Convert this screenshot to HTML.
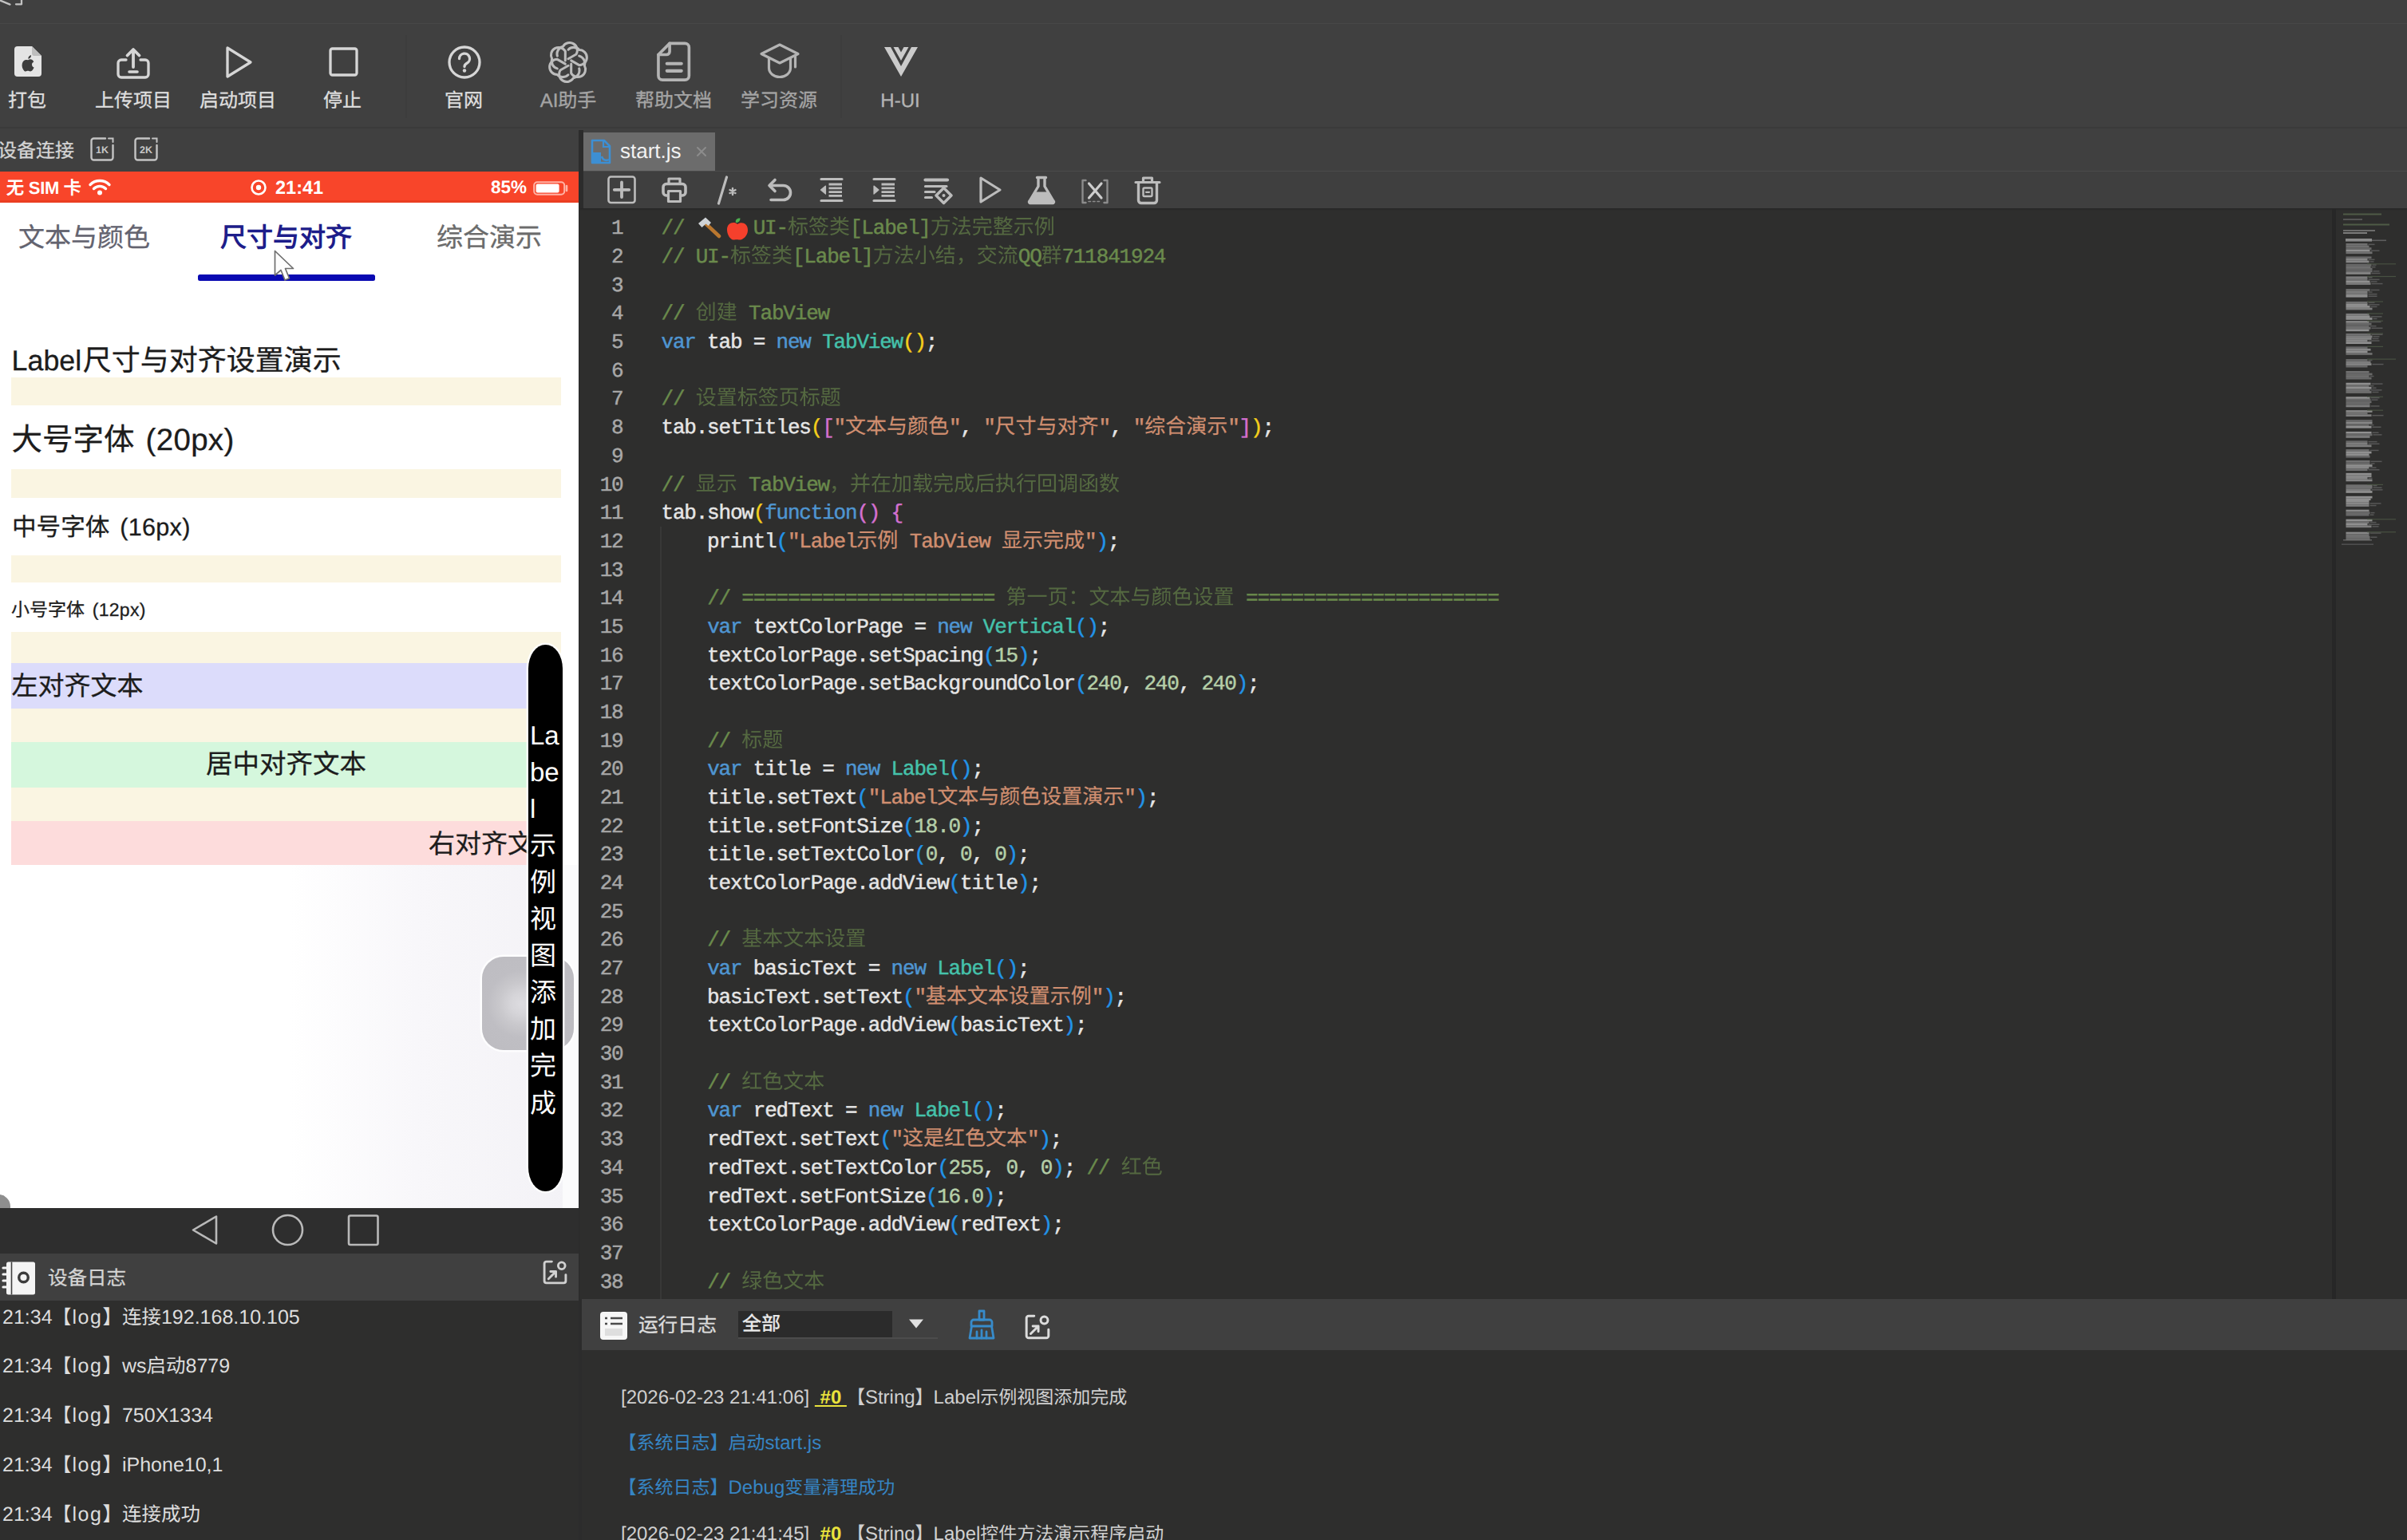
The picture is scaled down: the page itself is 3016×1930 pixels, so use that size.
<!DOCTYPE html>
<html lang="zh-CN"><head><meta charset="utf-8"><title>IDE - start.js</title>
<style>
*{box-sizing:border-box;margin:0;padding:0}
html,body{width:3016px;height:1930px;overflow:hidden;background:#404040}
body{position:relative;font-family:"Liberation Sans",sans-serif;color:#d8d8d8;text-rendering:geometricPrecision}
.a{position:absolute}
.t{position:absolute;white-space:nowrap}
.cj{display:inline-block;white-space:nowrap;letter-spacing:0;overflow:visible;text-align:left;vertical-align:baseline}
.cj i{display:inline-block;width:1em;text-align:center;font-style:normal}
.ic{fill:none;stroke:#d6d6d6;stroke-width:3.300;stroke-linecap:round;stroke-linejoin:round}
.icd{fill:none;stroke:#b4b4b4;stroke-width:3.200;stroke-linecap:round;stroke-linejoin:round}
.ei{fill:none;stroke:#bcbcbc;stroke-width:2.6;stroke-linecap:round;stroke-linejoin:round}
.code{position:absolute;left:828.5px;white-space:pre;font-family:"Liberation Mono",monospace;font-size:26px;letter-spacing:-1.2px;height:36px;line-height:36px;color:#e6e6e6;-webkit-text-stroke-width:.45px}
.ln{position:absolute;left:727px;width:53.5px;text-align:right;font-family:"Liberation Mono",monospace;font-size:26px;letter-spacing:-1.2px;height:36px;line-height:36px;color:#a8a8a8;-webkit-text-stroke-width:.45px}
.cm{color:#6a8a4c}.em{display:inline-block;letter-spacing:0}.cm .cj{opacity:.64;-webkit-text-stroke-width:0}.st .cj{-webkit-text-stroke-width:.2px}.kw{color:#4f96d2}.cl{color:#45c2ab}.st{color:#d08e70}.nu{color:#b5cea8}
.b1{color:#f4cf1c}.b2{color:#d470d0}.b3{color:#2294e8}
.code .cj{font-family:"Liberation Mono","Liberation Serif",serif}
</style></head>
<body>
<div class="a" style="left:0px;top:0px;width:3016px;height:163px;background:#404040;"></div>
<div class="a" style="left:0px;top:28.6px;width:3016px;height:1.6px;background:#474747;"></div>
<svg class="a" style="left:0px;top:0px;filter:blur(.5px)" width="34" height="10" viewBox="0 0 34 10"><path d="M-1 0L12.500 5.600M27 -1V5.300H20" fill="none" stroke="#c2c2c2" stroke-width="2.300" stroke-linecap="round" stroke-linejoin="round"/></svg>
<div class="a" style="left:508px;top:44px;width:1.5px;height:104px;background:#3d3d3d;"></div>
<div class="a" style="left:1053px;top:44px;width:1.5px;height:104px;background:#3d3d3d;"></div>
<div class="a" style="left:0px;top:159px;width:3016px;height:1.5px;background:#3a3a3a;"></div>
<svg class="a" style="left:18px;top:58px;" width="34" height="38" viewBox="0 0 34 38"><path d="M4 0H22L34 12V34a4 4 0 0 1-4 4H4a4 4 0 0 1-4-4V4a4 4 0 0 1 4-4z" fill="#e4e4e4"/><path d="M22 0V9a3 3 0 0 0 3 3h9z" fill="#bdbdbd"/><path d="M17.2 17.2c1.6-1.2 3.7-1.3 5.2-.2 1 .7 1.6 1.6 1.9 2.6-1.6.7-2.4 2-2.3 3.6.1 1.6 1 2.8 2.6 3.4-.6 1.9-1.700 3.500-3.200 4.500-1 .6-2.100.5-3.100 0-.9-.4-1.800-.4-2.700 0-1.100.5-2.200.5-3.100-.2-2.300-1.900-3.500-5.700-2.700-9.100.7-2.800 2.700-4.700 5.100-4.700.9 0 1.700.3 2.300.1z" fill="#3c3c3c"/><path d="M17.3 15.8c-.2-2.300 1.300-4.400 3.700-4.900.3 2.400-1.400 4.600-3.700 4.900z" fill="#3c3c3c"/></svg>
<svg class="a" style="left:145px;top:58px;" width="44" height="42" viewBox="0 0 44 42"><g class="ic"><path d="M13 17H7a4 4 0 0 0-4 4V35a4 4 0 0 0 4 4H37a4 4 0 0 0 4-4V21a4 4 0 0 0-4-4H31"/><path d="M22 26V5M14.500 11.500l7.500-7.500 7.500 7.500" style="stroke-width:3.800"/><path d="M17 32H27" style="stroke-width:3.600"/></g></svg>
<svg class="a" style="left:281px;top:56px;" width="38" height="44" viewBox="0 0 38 44"><path class="ic" d="M4 4L33 22L4 40Z"/></svg>
<svg class="a" style="left:411px;top:58px;" width="40" height="40" viewBox="0 0 40 40"><rect class="ic" x="3" y="3" width="33" height="33" rx="2.500"/></svg>
<svg class="a" style="left:560px;top:56px;" width="44" height="44" viewBox="0 0 44 44"><circle class="ic" cx="22" cy="22" r="19"/><path class="ic" d="M15.5 17.500a6.500 6.500 0 1 1 9.500 5.800c-2 1.100-3 2.200-3 4.200"/><circle cx="22" cy="32.500" r="2.200" fill="#d4d4d4"/></svg>
<svg class="a" style="left:686px;top:52px;" width="52" height="52" viewBox="0 0 52 52"><g class="icd" style="stroke-width:2.500;stroke:#bcbcbc" transform="translate(26 26) scale(1.220)"><path d="M0 -3.500L8.200 -8.200A7.800 7.800 0 0 0 -5.300 -16.200A7.800 7.800 0 0 0 -11.200 -6.500" transform="rotate(0)"/><path d="M0 -3.500L8.200 -8.200A7.800 7.800 0 0 0 -5.300 -16.200A7.800 7.800 0 0 0 -11.200 -6.500" transform="rotate(60)"/><path d="M0 -3.500L8.200 -8.200A7.800 7.800 0 0 0 -5.300 -16.200A7.800 7.800 0 0 0 -11.200 -6.500" transform="rotate(120)"/><path d="M0 -3.500L8.200 -8.200A7.800 7.800 0 0 0 -5.300 -16.200A7.800 7.800 0 0 0 -11.200 -6.500" transform="rotate(180)"/><path d="M0 -3.500L8.200 -8.200A7.800 7.800 0 0 0 -5.300 -16.200A7.800 7.800 0 0 0 -11.200 -6.500" transform="rotate(240)"/><path d="M0 -3.500L8.200 -8.200A7.800 7.800 0 0 0 -5.300 -16.200A7.800 7.800 0 0 0 -11.200 -6.500" transform="rotate(300)"/></g></svg>
<svg class="a" style="left:821px;top:51px;" width="48" height="54" viewBox="0 0 48 54"><g class="icd" transform="scale(1.130)"><path d="M16 3H33a4.500 4.500 0 0 1 4.500 4.500V39a4.500 4.500 0 0 1-4.500 4.500H8A4.500 4.500 0 0 1 3.500 39V15.500Z"/><path d="M16 3V12a3.500 3.500 0 0 1-3.500 3.500H3.500"/><path d="M13 25.500H29M13 33.500H29" style="stroke-width:3.600"/></g></svg>
<svg class="a" style="left:951px;top:52px;" width="52" height="50" viewBox="0 0 52 50"><g class="icd"><path d="M26 4L49 15.500L26 27L3 15.500Z"/><path d="M12.500 21V33c0 6.500 6 11.500 13.500 11.500s13.500-5 13.500-11.500V21"/><path d="M45.500 18V32"/></g></svg>
<svg class="a" style="left:1107.5px;top:58.5px;" width="42" height="37" viewBox="0 0 42 37"><path d="M0 0H8L21 24L34 0H42L21 37Z" fill="#cbcbcb"/><path d="M11.500 0H17.500L21 6.500L24.500 0H30.500L21 17Z" fill="#cbcbcb"/></svg>
<div class="t" style="top:109.2px;height:36px;line-height:36px;font-size:24px;left:34px;width:400px;margin-left:-200px;text-align:center;color:#dedede;-webkit-text-stroke-width:.35px"><span class="cj" style="width:48px;font-size:24px"><i>打</i><i>包</i></span></div>
<div class="t" style="top:109.2px;height:36px;line-height:36px;font-size:24px;left:167px;width:400px;margin-left:-200px;text-align:center;color:#dedede;-webkit-text-stroke-width:.35px"><span class="cj" style="width:96px;font-size:24px"><i>上</i><i>传</i><i>项</i><i>目</i></span></div>
<div class="t" style="top:109.2px;height:36px;line-height:36px;font-size:24px;left:298px;width:400px;margin-left:-200px;text-align:center;color:#dedede;-webkit-text-stroke-width:.35px"><span class="cj" style="width:96px;font-size:24px"><i>启</i><i>动</i><i>项</i><i>目</i></span></div>
<div class="t" style="top:109.2px;height:36px;line-height:36px;font-size:24px;left:429px;width:400px;margin-left:-200px;text-align:center;color:#dedede;-webkit-text-stroke-width:.35px"><span class="cj" style="width:48px;font-size:24px"><i>停</i><i>止</i></span></div>
<div class="t" style="top:109.2px;height:36px;line-height:36px;font-size:24px;left:581px;width:400px;margin-left:-200px;text-align:center;color:#dedede;-webkit-text-stroke-width:.35px"><span class="cj" style="width:48px;font-size:24px"><i>官</i><i>网</i></span></div>
<div class="t" style="top:109.2px;height:36px;line-height:36px;font-size:24px;left:712px;width:400px;margin-left:-200px;text-align:center;color:#a4a4a4;-webkit-text-stroke-width:.35px">AI<span class="cj" style="width:48px;font-size:24px"><i>助</i><i>手</i></span></div>
<div class="t" style="top:109.2px;height:36px;line-height:36px;font-size:24px;left:844px;width:400px;margin-left:-200px;text-align:center;color:#a4a4a4;-webkit-text-stroke-width:.35px"><span class="cj" style="width:96px;font-size:24px"><i>帮</i><i>助</i><i>文</i><i>档</i></span></div>
<div class="t" style="top:109.2px;height:36px;line-height:36px;font-size:24px;left:976px;width:400px;margin-left:-200px;text-align:center;color:#a4a4a4;-webkit-text-stroke-width:.35px"><span class="cj" style="width:96px;font-size:24px"><i>学</i><i>习</i><i>资</i><i>源</i></span></div>
<div class="t" style="top:109.2px;height:36px;line-height:36px;font-size:24px;left:1128px;width:400px;margin-left:-200px;text-align:center;color:#b4b4b4;-webkit-text-stroke-width:.35px">H-UI</div>
<div class="a" style="left:0px;top:163px;width:725px;height:52px;background:#404040;"></div>
<div class="t" style="top:171.5px;height:36px;line-height:36px;font-size:24px;left:-3px;color:#d4d4d4;-webkit-text-stroke-width:.3px"><span class="cj" style="width:96px;font-size:24px"><i>设</i><i>备</i><i>连</i><i>接</i></span></div>
<svg class="a" style="left:112px;top:171px;" width="32" height="32" viewBox="0 0 32 32"><path d="M20 2.500H5.500A3 3 0 0 0 2.500 5.500V26.500A3 3 0 0 0 5.500 29.500H26.500A3 3 0 0 0 29.500 26.500V11" fill="none" stroke="#c4c4c4" stroke-width="2.400" stroke-linecap="round"/><path d="M24 2.500H29.500V7" fill="none" stroke="#c4c4c4" stroke-width="2" stroke-linecap="round"/><text x="16" y="21" font-family="Liberation Sans,sans-serif" font-size="12.500" font-weight="bold" fill="#c8c8c8" text-anchor="middle">1K</text></svg>
<svg class="a" style="left:167px;top:171px;" width="32" height="32" viewBox="0 0 32 32"><path d="M20 2.500H5.500A3 3 0 0 0 2.500 5.500V26.500A3 3 0 0 0 5.500 29.500H26.500A3 3 0 0 0 29.500 26.500V11" fill="none" stroke="#c4c4c4" stroke-width="2.400" stroke-linecap="round"/><path d="M24 2.500H29.500V7" fill="none" stroke="#c4c4c4" stroke-width="2" stroke-linecap="round"/><text x="16" y="21" font-family="Liberation Sans,sans-serif" font-size="12.500" font-weight="bold" fill="#c8c8c8" text-anchor="middle">2K</text></svg>
<div class="a" style="left:0px;top:215px;width:725px;height:1299px;background:#ffffff;"></div>
<div class="a" style="left:0px;top:1084px;width:725px;height:430px;background:linear-gradient(90deg,#ffffff 0%,#ffffff 50%,#f8f7fa 72%,#f3f2f6 100%);"></div>
<div class="a" style="left:0px;top:215px;width:725px;height:38.5px;background:#f8452a;"></div>
<div class="a" style="left:0px;top:250.5px;width:725px;height:3px;background:#ea3d22;"></div>
<div class="t" style="top:218.5px;height:33px;line-height:33px;font-size:22px;left:8px;color:#ffffff;font-weight:bold;letter-spacing:-0.3px"><span class="cj" style="width:22px;font-size:22px"><i>无</i></span> SIM <span class="cj" style="width:22px;font-size:22px"><i>卡</i></span></div>
<svg class="a" style="left:110px;top:222px;" width="30" height="24" viewBox="0 0 30 24"><g fill="none" stroke="#fff" stroke-width="3.400" stroke-linecap="round"><path d="M3 9.500a17 17 0 0 1 24 0"/><path d="M7.500 14.500a10.500 10.500 0 0 1 15 0"/></g><circle cx="15" cy="19.500" r="3" fill="#fff"/></svg>
<svg class="a" style="left:313px;top:224px;" width="22" height="22" viewBox="0 0 22 22"><circle cx="11" cy="11" r="8.500" fill="none" stroke="#fff" stroke-width="2.600"/><circle cx="11" cy="11" r="3.200" fill="#fff"/></svg>
<div class="t" style="top:217.5px;height:35px;line-height:35px;font-size:23.5px;left:345px;color:#ffffff;font-weight:bold">21:41</div>
<div class="t" style="top:218.0px;height:34px;line-height:34px;font-size:22.5px;right:2356px;text-align:right;color:#ffffff;font-weight:bold">85%</div>
<svg class="a" style="left:668px;top:227px;" width="46" height="18" viewBox="0 0 46 18"><rect x="1.200" y="1.200" width="38" height="15.600" rx="4" fill="none" stroke="#ffb3a6" stroke-width="2"/><rect x="3.600" y="3.600" width="29" height="10.800" rx="2" fill="#fff"/><path d="M42 6v6" stroke="#ffb3a6" stroke-width="2.600" stroke-linecap="round"/></svg>
<div class="t" style="top:273.3px;height:50px;line-height:50px;font-size:33px;left:23px;color:#63636f;-webkit-text-stroke-width:.3px"><span class="cj" style="width:165px;font-size:33px"><i>文</i><i>本</i><i>与</i><i>颜</i><i>色</i></span></div>
<div class="t" style="top:273.3px;height:50px;line-height:50px;font-size:33px;left:276px;color:#1d1d8a;font-weight:bold"><span class="cj" style="width:165px;font-size:33px"><i>尺</i><i>寸</i><i>与</i><i>对</i><i>齐</i></span></div>
<div class="t" style="top:273.3px;height:50px;line-height:50px;font-size:33px;left:547px;color:#6b6b6b;-webkit-text-stroke-width:.3px"><span class="cj" style="width:132px;font-size:33px"><i>综</i><i>合</i><i>演</i><i>示</i></span></div>
<div class="a" style="left:248px;top:343.5px;width:222px;height:8px;background:#0909b2;border-radius:2.500px"></div>
<div class="t" style="top:424.6px;height:54px;line-height:54px;font-size:35.8px;left:14.6px;color:#1c1c1c;-webkit-text-stroke-width:.3px">Label<span style="margin-left:1.500px"><span class="cj" style="width:324px;font-size:36px"><i>尺</i><i>寸</i><i>与</i><i>对</i><i>齐</i><i>设</i><i>置</i><i>演</i><i>示</i></span></span></div>
<div class="a" style="left:14px;top:473px;width:689px;height:35px;background:#faf5e2;"></div>
<div class="a" style="left:14px;top:588px;width:689px;height:36px;background:#faf5e2;"></div>
<div class="a" style="left:14px;top:696px;width:689px;height:34px;background:#faf5e2;"></div>
<div class="a" style="left:14px;top:792px;width:689px;height:39px;background:#faf5e2;"></div>
<div class="a" style="left:14px;top:888px;width:689px;height:42px;background:#faf5e2;"></div>
<div class="a" style="left:14px;top:987px;width:689px;height:42px;background:#faf5e2;"></div>
<div class="t" style="top:523.0px;height:58px;line-height:58px;font-size:38.5px;left:14.6px;color:#1c1c1c;word-spacing:3px;letter-spacing:.3px;-webkit-text-stroke-width:.3px"><span class="cj" style="width:154.0px;font-size:38.5px"><i>大</i><i>号</i><i>字</i><i>体</i></span> (20px)</div>
<div class="t" style="top:638.0px;height:46px;line-height:46px;font-size:30.6px;left:15px;color:#1c1c1c;word-spacing:4px;letter-spacing:.3px;-webkit-text-stroke-width:.3px"><span class="cj" style="width:122.4px;font-size:30.6px"><i>中</i><i>号</i><i>字</i><i>体</i></span> (16px)</div>
<div class="t" style="top:747.0px;height:34px;line-height:34px;font-size:23px;left:14px;color:#1e1e1e;word-spacing:3px;letter-spacing:.3px;-webkit-text-stroke-width:.3px"><span class="cj" style="width:92px;font-size:23px"><i>小</i><i>号</i><i>字</i><i>体</i></span> (12px)</div>
<div class="a" style="left:14px;top:831px;width:689px;height:57px;background:#dcdcfb;"></div>
<div class="t" style="top:835.0px;height:50px;line-height:50px;font-size:33px;left:14.6px;color:#1c1c1c;-webkit-text-stroke-width:.3px"><span class="cj" style="width:165px;font-size:33px"><i>左</i><i>对</i><i>齐</i><i>文</i><i>本</i></span></div>
<div class="a" style="left:14px;top:930px;width:689px;height:57px;background:#d5f7dd;"></div>
<div class="t" style="top:934.0px;height:50px;line-height:50px;font-size:33.5px;left:358.5px;width:400px;margin-left:-200px;text-align:center;color:#1c1c1c;-webkit-text-stroke-width:.3px"><span class="cj" style="width:201.0px;font-size:33.5px"><i>居</i><i>中</i><i>对</i><i>齐</i><i>文</i><i>本</i></span></div>
<div class="a" style="left:14px;top:1029px;width:689px;height:55px;background:#fddcdc;"></div>
<div class="t" style="top:1033.0px;height:50px;line-height:50px;font-size:33px;right:2314px;text-align:right;color:#1c1c1c;-webkit-text-stroke-width:.3px"><span class="cj" style="width:165px;font-size:33px"><i>右</i><i>对</i><i>齐</i><i>文</i><i>本</i></span></div>
<div class="a" style="left:705px;top:1084px;width:20px;height:430px;background:#fbfbfc;"></div>
<div class="a" style="left:604px;top:1199px;width:115px;height:117px;border-radius:27px;background:radial-gradient(circle at 49px 59px,#dddce0 0,#d6d5d9 13px,#c9c8cc 27px,#bfbec3 42px,#bcbbc0 100%);box-shadow:0 0 0 2.500px rgba(255,255,255,.8)"></div>
<div class="a" style="left:662px;top:808px;width:42.5px;height:685px;background:#000000;border-radius:21.250px / 30px;box-shadow:0 0 0 2.500px rgba(255,255,255,.85)"></div>
<div class="t" style="top:897.0px;height:50px;line-height:50px;font-size:33px;left:664px;color:#ffffff;">La</div>
<div class="t" style="top:943.05px;height:50px;line-height:50px;font-size:33px;left:664px;color:#ffffff;">be</div>
<div class="t" style="top:989.1px;height:50px;line-height:50px;font-size:33px;left:664px;color:#ffffff;">l</div>
<div class="t" style="top:1035.15px;height:50px;line-height:50px;font-size:33px;left:664px;color:#ffffff;"><span class="cj" style="width:33px;font-size:33px"><i>示</i></span></div>
<div class="t" style="top:1081.2px;height:50px;line-height:50px;font-size:33px;left:664px;color:#ffffff;"><span class="cj" style="width:33px;font-size:33px"><i>例</i></span></div>
<div class="t" style="top:1127.25px;height:50px;line-height:50px;font-size:33px;left:664px;color:#ffffff;"><span class="cj" style="width:33px;font-size:33px"><i>视</i></span></div>
<div class="t" style="top:1173.3px;height:50px;line-height:50px;font-size:33px;left:664px;color:#ffffff;"><span class="cj" style="width:33px;font-size:33px"><i>图</i></span></div>
<div class="t" style="top:1219.35px;height:50px;line-height:50px;font-size:33px;left:664px;color:#ffffff;"><span class="cj" style="width:33px;font-size:33px"><i>添</i></span></div>
<div class="t" style="top:1265.4px;height:50px;line-height:50px;font-size:33px;left:664px;color:#ffffff;"><span class="cj" style="width:33px;font-size:33px"><i>加</i></span></div>
<div class="t" style="top:1311.45px;height:50px;line-height:50px;font-size:33px;left:664px;color:#ffffff;"><span class="cj" style="width:33px;font-size:33px"><i>完</i></span></div>
<div class="t" style="top:1357.5px;height:50px;line-height:50px;font-size:33px;left:664px;color:#ffffff;"><span class="cj" style="width:33px;font-size:33px"><i>成</i></span></div>
<svg class="a" style="left:342px;top:312px;" width="30" height="44" viewBox="0 0 30 44"><path d="M2.500 2.500V33L10 26.500L15 39L20.500 36.800L15.500 24.500H25.500Z" fill="#fdfdfd" stroke="#6e6e6e" stroke-width="1.700" stroke-linejoin="round"/></svg>
<svg class="a" style="left:0px;top:1492px;" width="16" height="22" viewBox="0 0 16 22"><circle cx="-2" cy="20" r="15" fill="#8e8e8e"/></svg>
<div class="a" style="left:0px;top:1513.5px;width:727px;height:58px;background:#2e2e2e;"></div>
<svg class="a" style="left:236px;top:1519px;" width="240" height="46" viewBox="0 0 240 46"><g fill="none" stroke="#b9b9b9" stroke-width="2.600" stroke-linejoin="round"><path d="M35 5.500V39.500L6 22.500Z"/><circle cx="124.500" cy="22.500" r="18.500"/><rect x="201" y="4.500" width="36.500" height="36.500" rx="2"/></g></svg>
<div class="a" style="left:0px;top:1571.2px;width:727px;height:59px;background:#404040;"></div>
<svg class="a" style="left:2px;top:1580px;" width="44" height="44" viewBox="0 0 44 44"><rect x="6" y="1.500" width="36" height="41" rx="2.500" fill="#f4f4f4"/><path d="M2 9H10M2 17H10M2 25H10M2 33H10" stroke="#f4f4f4" stroke-width="3.200" stroke-linecap="round"/><path d="M12.500 1.500V42.500" stroke="#404040" stroke-width="1.600"/><circle cx="27.500" cy="21" r="5.800" fill="none" stroke="#3c3c3c" stroke-width="3.400"/></svg>
<div class="t" style="top:1584.1px;height:37px;line-height:37px;font-size:24.5px;left:60px;color:#d4d4d4;-webkit-text-stroke-width:.3px"><span class="cj" style="width:98.0px;font-size:24.5px"><i>设</i><i>备</i><i>日</i><i>志</i></span></div>
<svg class="a" style="left:678.5px;top:1577.5px;" width="33" height="33" viewBox="0 0 32 32"><g fill="none" stroke="#d0d0d0" stroke-width="2.800" stroke-linecap="round" stroke-linejoin="round"><path d="M12 3H5.500A2.500 2.500 0 0 0 3 5.500V26.500A2.500 2.500 0 0 0 5.500 29H26.500A2.500 2.500 0 0 0 29 26.500V19"/><circle cx="24" cy="8" r="4.200"/><path d="M8 24L17 15M10.500 15H17V21.500"/></g></svg>
<div class="a" style="left:0px;top:1630.2px;width:727px;height:300px;background:#2e2e2d;"></div>
<div class="t" style="top:1631.6px;height:38px;line-height:38px;font-size:25px;left:3px;color:#dddddd;">21:34<span class="cj" style="width:24px;font-size:24px"><i>【</i></span><span style="letter-spacing:1.5px;margin-left:1px">log</span><span class="cj" style="width:73.5px;font-size:24.5px"><i>】</i><i>连</i><i>接</i></span>192.168.10.105</div>
<div class="t" style="top:1693.45px;height:38px;line-height:38px;font-size:25px;left:3px;color:#dddddd;">21:34<span class="cj" style="width:24px;font-size:24px"><i>【</i></span><span style="letter-spacing:1.5px;margin-left:1px">log</span><span class="cj" style="width:24.5px;font-size:24.5px"><i>】</i></span>ws<span class="cj" style="width:49.0px;font-size:24.5px"><i>启</i><i>动</i></span>8779</div>
<div class="t" style="top:1755.3px;height:38px;line-height:38px;font-size:25px;left:3px;color:#dddddd;">21:34<span class="cj" style="width:24px;font-size:24px"><i>【</i></span><span style="letter-spacing:1.5px;margin-left:1px">log</span><span class="cj" style="width:24.5px;font-size:24.5px"><i>】</i></span>750X1334</div>
<div class="t" style="top:1817.15px;height:38px;line-height:38px;font-size:25px;left:3px;color:#dddddd;">21:34<span class="cj" style="width:24px;font-size:24px"><i>【</i></span><span style="letter-spacing:1.5px;margin-left:1px">log</span><span class="cj" style="width:24.5px;font-size:24.5px"><i>】</i></span>iPhone10,1</div>
<div class="t" style="top:1879.0px;height:38px;line-height:38px;font-size:25px;left:3px;color:#dddddd;">21:34<span class="cj" style="width:24px;font-size:24px"><i>【</i></span><span style="letter-spacing:1.5px;margin-left:1px">log</span><span class="cj" style="width:122.5px;font-size:24.5px"><i>】</i><i>连</i><i>接</i><i>成</i><i>功</i></span></div>
<div class="a" style="left:725px;top:163px;width:6px;height:1767px;background:#2c2c2c;"></div>
<div class="a" style="left:731px;top:163px;width:2285px;height:51px;background:#404040;"></div>
<div class="a" style="left:731px;top:166px;width:165px;height:48px;background:#6c6c6c;"></div>
<svg class="a" style="left:739px;top:174px;" width="28" height="32" viewBox="0 0 28 32"><path d="M3 2H18L25 9V30H3Z" fill="none" stroke="#3d8fd3" stroke-width="2.600" stroke-linejoin="round"/><path d="M3 17H14V30H3Z" fill="#3d8fd3"/><path d="M17 2V10H25" fill="none" stroke="#3d8fd3" stroke-width="2.200"/><path d="M15 22a6 6 0 0 0 9 4" fill="none" stroke="#3d8fd3" stroke-width="2.600"/></svg>
<div class="t" style="top:170.0px;height:39px;line-height:39px;font-size:26px;left:777px;color:#f2f2f2;">start.js</div>
<svg class="a" style="left:871px;top:182px;" width="16" height="16" viewBox="0 0 16 16"><path d="M3 3L13 13M13 3L3 13" stroke="#8c8c8c" stroke-width="2" stroke-linecap="round"/></svg>
<div class="a" style="left:731px;top:214px;width:2285px;height:48px;background:#3f3f3f;"></div>
<div class="a" style="left:731px;top:213.5px;width:2285px;height:1.2px;background:#4a4a4a;"></div>
<svg class="a" style="left:759.0px;top:217.5px;" width="40" height="40" viewBox="0 0 40 40"><g class="ei"><rect x="3.500" y="3.500" width="33" height="32.500" rx="3"/><path d="M20 10.500V29M10.800 19.800H29.200" style="stroke-width:3.800"/></g></svg>
<svg class="a" style="left:825.0px;top:217.5px;" width="40" height="40" viewBox="0 0 40 40"><g class="ei"><path d="M13 12.500V6H27V12.500" style="stroke-width:3.200"/><rect x="6" y="12.500" width="28" height="14.500" rx="4" style="stroke-width:3.600"/><rect x="12.500" y="21.500" width="15" height="13" fill="#3f3f3f" style="stroke-width:3.200"/></g></svg>
<svg class="a" style="left:891.0px;top:217.5px;" width="40" height="40" viewBox="0 0 40 40"><g class="ei"><path d="M19.500 4L9.500 37" style="stroke-width:3.200"/><path d="M27 18V26M23.500 20L30.500 24M30.500 20L23.500 24" style="stroke-width:2.400"/></g></svg>
<svg class="a" style="left:957.0px;top:217.5px;" width="40" height="40" viewBox="0 0 40 40"><g class="ei"><path d="M8 14.500H24.500a9 9 0 0 1 0 18H9" style="stroke-width:3.600"/><path d="M14 7.500L7 14.500L14 21.500" style="stroke-width:3.600"/></g></svg>
<svg class="a" style="left:1022.0px;top:217.5px;" width="40" height="40" viewBox="0 0 40 40"><g class="ei"><path d="M7 6.500H33M7 33.500H33" style="stroke-width:3.200"/><path d="M16.500 13H33M16.500 17.800H33M16.500 22.600H33M16.500 27.400H33" style="stroke-width:2.800;stroke-linecap:butt"/><path d="M12.500 15L6.500 20L12.500 25Z" fill="#bcbcbc" style="stroke-width:1.200"/></g></svg>
<svg class="a" style="left:1088.0px;top:217.5px;" width="40" height="40" viewBox="0 0 40 40"><g class="ei"><path d="M7 6.500H33M7 33.500H33" style="stroke-width:3.200"/><path d="M16.500 13H33M16.500 17.800H33M16.500 22.600H33M16.500 27.400H33" style="stroke-width:2.800;stroke-linecap:butt"/><path d="M7 15L13 20L7 25Z" fill="#bcbcbc" style="stroke-width:1.200"/></g></svg>
<svg class="a" style="left:1154.0px;top:217.5px;" width="40" height="40" viewBox="0 0 40 40"><g class="ei"><path d="M5.500 7.500H33" style="stroke-width:4.200"/><path d="M5.500 15.500H32M5.500 22.500H17M5.500 29.500H13.500" style="stroke-width:3.200"/><path d="M28.500 17.500L38 27L28.500 36.500L19 27Z" fill="#3f3f3f" style="stroke-width:3.400"/><circle cx="28.500" cy="27" r="2" fill="#bcbcbc" stroke="none"/></g></svg>
<svg class="a" style="left:1220.0px;top:217.5px;" width="40" height="40" viewBox="0 0 40 40"><g class="ei"><path d="M9 5L33 20L9 35Z" style="stroke-width:3.200"/></g></svg>
<svg class="a" style="left:1285.0px;top:217.5px;" width="40" height="40" viewBox="0 0 40 40"><g class="ei"><path d="M14.500 4.500H25.500M16 5V15.500L5 34A1.500 1.500 0 0 0 6.500 36.500H33.500A1.500 1.500 0 0 0 35 34L24 15.500V5" style="stroke-width:3.400"/><path d="M11.500 22.500H28.500L35 35.500H5Z" fill="#bcbcbc" stroke="none"/></g></svg>
<svg class="a" style="left:1352.0px;top:217.5px;" width="40" height="40" viewBox="0 0 40 40"><g class="ei"><path d="M8.500 8H4.500V36H8.500M31.500 8H35.500V36H31.500" style="stroke:#8c8c8c;stroke-width:2.400"/><path d="M12.500 12L28 30M28 12L12.500 30" style="stroke:#cdcdcd;stroke-width:3.200"/><path d="M12 34.500H28" style="stroke:#8c8c8c;stroke-width:1.600;stroke-dasharray:2.500 3"/></g></svg>
<svg class="a" style="left:1418.0px;top:217.5px;" width="40" height="40" viewBox="0 0 40 40"><g class="ei"><path d="M5 10.500H35M14.500 10V5H25.500V10" style="stroke-width:3.200"/><path d="M8.500 11V33a3.500 3.500 0 0 0 3.500 3.500H28A3.500 3.500 0 0 0 31.500 33V11" style="stroke-width:3.400"/><rect x="14.500" y="17.500" width="11" height="10.500" rx="1.500" style="stroke-width:2.400"/><path d="M18 22.800H22" style="stroke-width:2.200"/></g></svg>
<div class="a" style="left:727px;top:261px;width:2289px;height:1367px;background:#2e2e2d;"></div>
<div class="a" style="left:727px;top:260.5px;width:2289px;height:3px;background:linear-gradient(#262626,#2e2e2d);"></div>
<div class="a" style="left:2922px;top:262px;width:5px;height:1366px;background:#272727;"></div>
<div class="a" style="left:827px;top:660px;width:1.5px;height:968px;background:#383837;"></div>
<svg class="a" style="left:0;top:0;filter:blur(.7px)" width="3016" height="700" viewBox="0 0 3016 700" ><rect x="2936.0" y="267.5" width="48.0" height="2.0" fill="#55634b" opacity="0.85"/><rect x="2936.0" y="274.0" width="24.0" height="2.0" fill="#5a5a5a" opacity="0.85"/><rect x="2936.0" y="280.5" width="58.0" height="2.0" fill="#55634b" opacity="0.85"/><rect x="2936.0" y="288.0" width="40.0" height="2.0" fill="#777777" opacity="0.85"/><rect x="2936.0" y="291.0" width="30.0" height="2.0" fill="#8a8a8a" opacity="0.85"/><rect x="2939.0" y="299.0" width="33.0" height="3.6" fill="#8f8f8f" opacity="0.95"/><rect x="2972.0" y="300.5" width="18.0" height="1.6" fill="#6a6a6a" opacity="0.80"/><rect x="2939.5" y="305.0" width="27.0" height="2.7" fill="#747474" opacity="0.95"/><rect x="2967.5" y="305.6" width="8.0" height="1.5" fill="#626262" opacity="0.80"/><rect x="2939.5" y="307.6" width="29.0" height="2.7" fill="#747474" opacity="0.95"/><rect x="2939.5" y="310.2" width="32.0" height="2.7" fill="#6c6c6c" opacity="0.95"/><rect x="2939.5" y="312.8" width="30.0" height="2.7" fill="#969696" opacity="0.95"/><rect x="2970.5" y="313.4" width="11.0" height="1.5" fill="#626262" opacity="0.80"/><rect x="2939.5" y="315.4" width="33.0" height="2.7" fill="#747474" opacity="0.95"/><rect x="2939.5" y="321.4" width="32.0" height="2.7" fill="#6c6c6c" opacity="0.95"/><rect x="2939.5" y="324.0" width="27.0" height="2.7" fill="#8c8c8c" opacity="0.95"/><rect x="2967.5" y="324.6" width="8.0" height="1.5" fill="#626262" opacity="0.80"/><rect x="2939.5" y="326.6" width="29.0" height="2.7" fill="#8c8c8c" opacity="0.95"/><rect x="2969.5" y="327.2" width="5.0" height="1.5" fill="#626262" opacity="0.80"/><rect x="2939.5" y="330.7" width="32.0" height="2.7" fill="#6c6c6c" opacity="0.95"/><rect x="2972.5" y="331.3" width="5.0" height="1.5" fill="#626262" opacity="0.80"/><rect x="2939.5" y="333.3" width="31.0" height="2.7" fill="#747474" opacity="0.95"/><rect x="2971.5" y="333.9" width="5.0" height="1.5" fill="#626262" opacity="0.80"/><rect x="2939.5" y="335.9" width="33.0" height="2.7" fill="#6c6c6c" opacity="0.95"/><rect x="2939.5" y="338.5" width="33.0" height="2.7" fill="#6c6c6c" opacity="0.95"/><rect x="2973.5" y="339.1" width="8.0" height="1.5" fill="#626262" opacity="0.80"/><rect x="2939.5" y="341.1" width="31.0" height="2.7" fill="#8c8c8c" opacity="0.95"/><rect x="2971.5" y="341.7" width="11.0" height="1.5" fill="#626262" opacity="0.80"/><rect x="2966.0" y="330.2" width="36.0" height="1.2" fill="#4f5a47" opacity="0.80"/><rect x="2939.5" y="346.4" width="27.0" height="2.7" fill="#828282" opacity="0.95"/><rect x="2967.5" y="347.0" width="5.0" height="1.5" fill="#626262" opacity="0.80"/><rect x="2939.5" y="349.0" width="27.0" height="2.7" fill="#747474" opacity="0.95"/><rect x="2967.5" y="349.6" width="14.0" height="1.5" fill="#626262" opacity="0.80"/><rect x="2939.5" y="351.6" width="30.0" height="2.7" fill="#969696" opacity="0.95"/><rect x="2970.5" y="352.2" width="8.0" height="1.5" fill="#626262" opacity="0.80"/><rect x="2939.5" y="354.2" width="31.0" height="2.7" fill="#828282" opacity="0.95"/><rect x="2971.5" y="354.8" width="14.0" height="1.5" fill="#626262" opacity="0.80"/><rect x="2966.0" y="345.9" width="36.0" height="1.2" fill="#4f5a47" opacity="0.80"/><rect x="2939.5" y="362.1" width="30.0" height="2.7" fill="#747474" opacity="0.95"/><rect x="2970.5" y="362.7" width="11.0" height="1.5" fill="#626262" opacity="0.80"/><rect x="2939.5" y="364.7" width="27.0" height="2.7" fill="#828282" opacity="0.95"/><rect x="2967.5" y="365.3" width="5.0" height="1.5" fill="#626262" opacity="0.80"/><rect x="2939.5" y="367.3" width="27.0" height="2.7" fill="#828282" opacity="0.95"/><rect x="2967.5" y="367.9" width="11.0" height="1.5" fill="#626262" opacity="0.80"/><rect x="2939.5" y="369.9" width="27.0" height="2.7" fill="#969696" opacity="0.95"/><rect x="2967.5" y="370.5" width="11.0" height="1.5" fill="#626262" opacity="0.80"/><rect x="2939.5" y="377.9" width="27.0" height="2.7" fill="#747474" opacity="0.95"/><rect x="2967.5" y="378.5" width="8.0" height="1.5" fill="#626262" opacity="0.80"/><rect x="2939.5" y="380.5" width="27.0" height="2.7" fill="#969696" opacity="0.95"/><rect x="2967.5" y="381.1" width="14.0" height="1.5" fill="#626262" opacity="0.80"/><rect x="2939.5" y="383.1" width="30.0" height="2.7" fill="#969696" opacity="0.95"/><rect x="2970.5" y="383.7" width="8.0" height="1.5" fill="#626262" opacity="0.80"/><rect x="2939.5" y="385.7" width="33.0" height="2.7" fill="#828282" opacity="0.95"/><rect x="2966.0" y="377.4" width="20.0" height="1.2" fill="#4f5a47" opacity="0.80"/><rect x="2939.5" y="392.9" width="29.0" height="2.7" fill="#828282" opacity="0.95"/><rect x="2939.5" y="395.5" width="30.0" height="2.7" fill="#969696" opacity="0.95"/><rect x="2970.5" y="396.1" width="14.0" height="1.5" fill="#626262" opacity="0.80"/><rect x="2939.5" y="398.1" width="33.0" height="2.7" fill="#969696" opacity="0.95"/><rect x="2973.5" y="398.7" width="5.0" height="1.5" fill="#626262" opacity="0.80"/><rect x="2966.0" y="392.4" width="20.0" height="1.2" fill="#4f5a47" opacity="0.80"/><rect x="2939.5" y="402.1" width="29.0" height="2.7" fill="#8c8c8c" opacity="0.95"/><rect x="2969.5" y="402.7" width="14.0" height="1.5" fill="#626262" opacity="0.80"/><rect x="2939.5" y="404.7" width="32.0" height="2.7" fill="#6c6c6c" opacity="0.95"/><rect x="2939.5" y="407.3" width="29.0" height="2.7" fill="#6c6c6c" opacity="0.95"/><rect x="2969.5" y="407.9" width="8.0" height="1.5" fill="#626262" opacity="0.80"/><rect x="2939.5" y="409.9" width="31.0" height="2.7" fill="#747474" opacity="0.95"/><rect x="2971.5" y="410.5" width="14.0" height="1.5" fill="#626262" opacity="0.80"/><rect x="2939.5" y="412.5" width="29.0" height="2.7" fill="#969696" opacity="0.95"/><rect x="2966.0" y="401.6" width="20.0" height="1.2" fill="#4f5a47" opacity="0.80"/><rect x="2939.5" y="417.9" width="31.0" height="2.7" fill="#747474" opacity="0.95"/><rect x="2971.5" y="418.5" width="14.0" height="1.5" fill="#626262" opacity="0.80"/><rect x="2939.5" y="420.5" width="33.0" height="2.7" fill="#828282" opacity="0.95"/><rect x="2973.5" y="421.1" width="8.0" height="1.5" fill="#626262" opacity="0.80"/><rect x="2939.5" y="423.1" width="32.0" height="2.7" fill="#8c8c8c" opacity="0.95"/><rect x="2972.5" y="423.7" width="8.0" height="1.5" fill="#626262" opacity="0.80"/><rect x="2939.5" y="425.7" width="27.0" height="2.7" fill="#8c8c8c" opacity="0.95"/><rect x="2967.5" y="426.3" width="14.0" height="1.5" fill="#626262" opacity="0.80"/><rect x="2939.5" y="428.3" width="32.0" height="2.7" fill="#969696" opacity="0.95"/><rect x="2966.0" y="417.4" width="20.0" height="1.2" fill="#4f5a47" opacity="0.80"/><rect x="2939.5" y="434.3" width="27.0" height="2.7" fill="#6c6c6c" opacity="0.95"/><rect x="2939.5" y="436.9" width="31.0" height="2.7" fill="#8c8c8c" opacity="0.95"/><rect x="2939.5" y="439.5" width="27.0" height="2.7" fill="#969696" opacity="0.95"/><rect x="2939.5" y="442.1" width="33.0" height="2.7" fill="#747474" opacity="0.95"/><rect x="2966.0" y="433.8" width="20.0" height="1.2" fill="#4f5a47" opacity="0.80"/><rect x="2939.5" y="450.0" width="27.0" height="2.7" fill="#6c6c6c" opacity="0.95"/><rect x="2967.5" y="450.6" width="5.0" height="1.5" fill="#626262" opacity="0.80"/><rect x="2939.5" y="452.6" width="31.0" height="2.7" fill="#828282" opacity="0.95"/><rect x="2939.5" y="455.2" width="32.0" height="2.7" fill="#8c8c8c" opacity="0.95"/><rect x="2972.5" y="455.8" width="14.0" height="1.5" fill="#626262" opacity="0.80"/><rect x="2939.5" y="457.8" width="27.0" height="2.7" fill="#6c6c6c" opacity="0.95"/><rect x="2966.0" y="449.5" width="36.0" height="1.2" fill="#4f5a47" opacity="0.80"/><rect x="2939.5" y="465.0" width="29.0" height="2.7" fill="#747474" opacity="0.95"/><rect x="2939.5" y="467.6" width="33.0" height="2.7" fill="#6c6c6c" opacity="0.95"/><rect x="2939.5" y="470.2" width="29.0" height="2.7" fill="#747474" opacity="0.95"/><rect x="2969.5" y="470.8" width="5.0" height="1.5" fill="#626262" opacity="0.80"/><rect x="2939.5" y="472.8" width="32.0" height="2.7" fill="#6c6c6c" opacity="0.95"/><rect x="2939.5" y="479.7" width="31.0" height="2.7" fill="#969696" opacity="0.95"/><rect x="2971.5" y="480.3" width="14.0" height="1.5" fill="#626262" opacity="0.80"/><rect x="2939.5" y="482.3" width="29.0" height="2.7" fill="#747474" opacity="0.95"/><rect x="2969.5" y="482.9" width="5.0" height="1.5" fill="#626262" opacity="0.80"/><rect x="2939.5" y="484.9" width="32.0" height="2.7" fill="#969696" opacity="0.95"/><rect x="2972.5" y="485.5" width="5.0" height="1.5" fill="#626262" opacity="0.80"/><rect x="2939.5" y="487.5" width="30.0" height="2.7" fill="#747474" opacity="0.95"/><rect x="2970.5" y="488.1" width="14.0" height="1.5" fill="#626262" opacity="0.80"/><rect x="2939.5" y="490.1" width="32.0" height="2.7" fill="#747474" opacity="0.95"/><rect x="2972.5" y="490.7" width="8.0" height="1.5" fill="#626262" opacity="0.80"/><rect x="2939.5" y="497.2" width="30.0" height="2.7" fill="#969696" opacity="0.95"/><rect x="2970.5" y="497.8" width="11.0" height="1.5" fill="#626262" opacity="0.80"/><rect x="2939.5" y="499.8" width="31.0" height="2.7" fill="#6c6c6c" opacity="0.95"/><rect x="2971.5" y="500.4" width="8.0" height="1.5" fill="#626262" opacity="0.80"/><rect x="2939.5" y="502.4" width="32.0" height="2.7" fill="#6c6c6c" opacity="0.95"/><rect x="2939.5" y="505.0" width="30.0" height="2.7" fill="#6c6c6c" opacity="0.95"/><rect x="2939.5" y="507.6" width="30.0" height="2.7" fill="#828282" opacity="0.95"/><rect x="2970.5" y="508.2" width="11.0" height="1.5" fill="#626262" opacity="0.80"/><rect x="2966.0" y="496.7" width="20.0" height="1.2" fill="#4f5a47" opacity="0.80"/><rect x="2939.5" y="514.1" width="33.0" height="2.7" fill="#8c8c8c" opacity="0.95"/><rect x="2939.5" y="516.7" width="27.0" height="2.7" fill="#747474" opacity="0.95"/><rect x="2939.5" y="519.3" width="32.0" height="2.7" fill="#828282" opacity="0.95"/><rect x="2972.5" y="519.9" width="14.0" height="1.5" fill="#626262" opacity="0.80"/><rect x="2966.0" y="513.6" width="20.0" height="1.2" fill="#4f5a47" opacity="0.80"/><rect x="2939.5" y="526.1" width="33.0" height="2.7" fill="#6c6c6c" opacity="0.95"/><rect x="2939.5" y="528.7" width="33.0" height="2.7" fill="#8c8c8c" opacity="0.95"/><rect x="2939.5" y="531.3" width="29.0" height="2.7" fill="#6c6c6c" opacity="0.95"/><rect x="2969.5" y="531.9" width="5.0" height="1.5" fill="#626262" opacity="0.80"/><rect x="2939.5" y="533.9" width="32.0" height="2.7" fill="#969696" opacity="0.95"/><rect x="2972.5" y="534.5" width="11.0" height="1.5" fill="#626262" opacity="0.80"/><rect x="2939.5" y="540.9" width="32.0" height="2.7" fill="#969696" opacity="0.95"/><rect x="2972.5" y="541.5" width="8.0" height="1.5" fill="#626262" opacity="0.80"/><rect x="2939.5" y="543.5" width="33.0" height="2.7" fill="#6c6c6c" opacity="0.95"/><rect x="2973.5" y="544.1" width="11.0" height="1.5" fill="#626262" opacity="0.80"/><rect x="2939.5" y="546.1" width="30.0" height="2.7" fill="#828282" opacity="0.95"/><rect x="2939.5" y="552.3" width="27.0" height="2.7" fill="#6c6c6c" opacity="0.95"/><rect x="2967.5" y="552.9" width="11.0" height="1.5" fill="#626262" opacity="0.80"/><rect x="2939.5" y="554.9" width="27.0" height="2.7" fill="#828282" opacity="0.95"/><rect x="2967.5" y="555.5" width="14.0" height="1.5" fill="#626262" opacity="0.80"/><rect x="2939.5" y="557.5" width="32.0" height="2.7" fill="#828282" opacity="0.95"/><rect x="2939.5" y="563.1" width="29.0" height="2.7" fill="#747474" opacity="0.95"/><rect x="2969.5" y="563.7" width="11.0" height="1.5" fill="#626262" opacity="0.80"/><rect x="2939.5" y="565.7" width="32.0" height="2.7" fill="#969696" opacity="0.95"/><rect x="2939.5" y="568.3" width="29.0" height="2.7" fill="#969696" opacity="0.95"/><rect x="2939.5" y="570.9" width="30.0" height="2.7" fill="#6c6c6c" opacity="0.95"/><rect x="2939.5" y="577.0" width="30.0" height="2.7" fill="#747474" opacity="0.95"/><rect x="2970.5" y="577.6" width="14.0" height="1.5" fill="#626262" opacity="0.80"/><rect x="2939.5" y="579.6" width="30.0" height="2.7" fill="#6c6c6c" opacity="0.95"/><rect x="2970.5" y="580.2" width="5.0" height="1.5" fill="#626262" opacity="0.80"/><rect x="2939.5" y="582.2" width="33.0" height="2.7" fill="#969696" opacity="0.95"/><rect x="2939.5" y="584.8" width="29.0" height="2.7" fill="#8c8c8c" opacity="0.95"/><rect x="2969.5" y="585.4" width="8.0" height="1.5" fill="#626262" opacity="0.80"/><rect x="2939.5" y="587.4" width="27.0" height="2.7" fill="#747474" opacity="0.95"/><rect x="2967.5" y="588.0" width="14.0" height="1.5" fill="#626262" opacity="0.80"/><rect x="2939.5" y="592.8" width="32.0" height="2.7" fill="#969696" opacity="0.95"/><rect x="2939.5" y="595.4" width="32.0" height="2.7" fill="#8c8c8c" opacity="0.95"/><rect x="2939.5" y="598.0" width="27.0" height="2.7" fill="#8c8c8c" opacity="0.95"/><rect x="2967.5" y="598.6" width="5.0" height="1.5" fill="#626262" opacity="0.80"/><rect x="2939.5" y="600.6" width="33.0" height="2.7" fill="#8c8c8c" opacity="0.95"/><rect x="2939.5" y="607.3" width="33.0" height="2.7" fill="#747474" opacity="0.95"/><rect x="2973.5" y="607.9" width="5.0" height="1.5" fill="#626262" opacity="0.80"/><rect x="2939.5" y="609.9" width="33.0" height="2.7" fill="#747474" opacity="0.95"/><rect x="2973.5" y="610.5" width="11.0" height="1.5" fill="#626262" opacity="0.80"/><rect x="2939.5" y="612.5" width="31.0" height="2.7" fill="#828282" opacity="0.95"/><rect x="2971.5" y="613.1" width="14.0" height="1.5" fill="#626262" opacity="0.80"/><rect x="2939.5" y="615.1" width="33.0" height="2.7" fill="#969696" opacity="0.95"/><rect x="2966.0" y="606.8" width="20.0" height="1.2" fill="#4f5a47" opacity="0.80"/><rect x="2939.5" y="621.8" width="33.0" height="2.7" fill="#969696" opacity="0.95"/><rect x="2939.5" y="624.4" width="31.0" height="2.7" fill="#969696" opacity="0.95"/><rect x="2939.5" y="627.0" width="29.0" height="2.7" fill="#969696" opacity="0.95"/><rect x="2939.5" y="629.6" width="29.0" height="2.7" fill="#8c8c8c" opacity="0.95"/><rect x="2969.5" y="630.2" width="14.0" height="1.5" fill="#626262" opacity="0.80"/><rect x="2939.5" y="632.2" width="29.0" height="2.7" fill="#828282" opacity="0.95"/><rect x="2969.5" y="632.8" width="8.0" height="1.5" fill="#626262" opacity="0.80"/><rect x="2939.5" y="638.7" width="29.0" height="2.7" fill="#8c8c8c" opacity="0.95"/><rect x="2939.5" y="641.3" width="30.0" height="2.7" fill="#6c6c6c" opacity="0.95"/><rect x="2970.5" y="641.9" width="5.0" height="1.5" fill="#626262" opacity="0.80"/><rect x="2939.5" y="643.9" width="29.0" height="2.7" fill="#6c6c6c" opacity="0.95"/><rect x="2969.5" y="644.5" width="5.0" height="1.5" fill="#626262" opacity="0.80"/><rect x="2939.5" y="650.7" width="33.0" height="2.7" fill="#969696" opacity="0.95"/><rect x="2939.5" y="653.3" width="29.0" height="2.7" fill="#747474" opacity="0.95"/><rect x="2969.5" y="653.9" width="8.0" height="1.5" fill="#626262" opacity="0.80"/><rect x="2939.5" y="655.9" width="27.0" height="2.7" fill="#969696" opacity="0.95"/><rect x="2967.5" y="656.5" width="14.0" height="1.5" fill="#626262" opacity="0.80"/><rect x="2939.5" y="658.5" width="32.0" height="2.7" fill="#828282" opacity="0.95"/><rect x="2972.5" y="659.1" width="8.0" height="1.5" fill="#626262" opacity="0.80"/><rect x="2966.0" y="650.2" width="36.0" height="1.2" fill="#4f5a47" opacity="0.80"/><rect x="2939.5" y="666.7" width="29.0" height="2.7" fill="#8c8c8c" opacity="0.95"/><rect x="2969.5" y="667.3" width="14.0" height="1.5" fill="#626262" opacity="0.80"/><rect x="2939.5" y="669.3" width="29.0" height="2.7" fill="#747474" opacity="0.95"/><rect x="2939.5" y="671.9" width="30.0" height="2.7" fill="#747474" opacity="0.95"/><rect x="2970.5" y="672.5" width="8.0" height="1.5" fill="#626262" opacity="0.80"/><rect x="2939.5" y="674.5" width="30.0" height="2.7" fill="#747474" opacity="0.95"/><rect x="2966.0" y="666.2" width="36.0" height="1.2" fill="#4f5a47" opacity="0.80"/><rect x="2936.0" y="676.0" width="36.0" height="1.6" fill="#6a6a6a" opacity="0.80"/><rect x="2934.0" y="681.5" width="40.0" height="1.4" fill="#5c5c5c" opacity="0.80"/></svg>
<div class="ln" style="top:268.4px">1</div><div class="code" style="top:268.4px"><span class="cm">// <span class="em" style="width:36px;height:26px;vertical-align:-4px"><svg width="34" height="28" viewBox="0 0 34 28" style="display:block"><path d="M12 9L29 25" stroke="#b9772f" stroke-width="4.500" stroke-linecap="round"/><path d="M3 9L12 1.500L19 8L15.500 12L12.500 9.500L7.500 14Z" fill="#cfd3d6"/></svg></span><span class="em" style="width:36px;height:26px;vertical-align:-5px"><svg width="34" height="30" viewBox="0 0 34 30" style="display:block"><path d="M16 9C12 5 2.500 7 3 16.500C3.400 24 8.500 29.500 12.500 28.500C14.500 28 16 28 17.500 28.500C22 29.500 29 24 29 16.500C29 7 20.500 5.500 16 9Z" fill="#f5402c"/><path d="M14 7C13 3.500 15.500 1 19.500 1.500C19.500 5 17.500 7 14 7Z" fill="#4caf50"/></svg></span>UI-<span class="cj" style="width:78px;font-size:26px"><i>标</i><i>签</i><i>类</i></span>[Label]<span class="cj" style="width:156px;font-size:26px"><i>方</i><i>法</i><i>完</i><i>整</i><i>示</i><i>例</i></span></span></div>
<div class="ln" style="top:304.08px">2</div><div class="code" style="top:304.08px"><span class="cm">// UI-<span class="cj" style="width:78px;font-size:26px"><i>标</i><i>签</i><i>类</i></span>[Label]<span class="cj" style="width:182px;font-size:26px"><i>方</i><i>法</i><i>小</i><i>结</i><i>，</i><i>交</i><i>流</i></span>QQ<span class="cj" style="width:26px;font-size:26px"><i>群</i></span>711841924</span></div>
<div class="ln" style="top:339.76px">3</div>
<div class="ln" style="top:375.44px">4</div><div class="code" style="top:375.44px"><span class="cm">// <span class="cj" style="width:52px;font-size:26px"><i>创</i><i>建</i></span> TabView</span></div>
<div class="ln" style="top:411.12px">5</div><div class="code" style="top:411.12px"><span class="kw">var</span> tab = <span class="kw">new</span> <span class="cl">TabView</span><span class="b1">(</span><span class="b1">)</span>;</div>
<div class="ln" style="top:446.8px">6</div>
<div class="ln" style="top:482.48px">7</div><div class="code" style="top:482.48px"><span class="cm">// <span class="cj" style="width:182px;font-size:26px"><i>设</i><i>置</i><i>标</i><i>签</i><i>页</i><i>标</i><i>题</i></span></span></div>
<div class="ln" style="top:518.16px">8</div><div class="code" style="top:518.16px">tab.setTitles<span class="b1">(</span><span class="b2">[</span><span class="st">&quot;<span class="cj" style="width:130px;font-size:26px"><i>文</i><i>本</i><i>与</i><i>颜</i><i>色</i></span>&quot;</span>, <span class="st">&quot;<span class="cj" style="width:130px;font-size:26px"><i>尺</i><i>寸</i><i>与</i><i>对</i><i>齐</i></span>&quot;</span>, <span class="st">&quot;<span class="cj" style="width:104px;font-size:26px"><i>综</i><i>合</i><i>演</i><i>示</i></span>&quot;</span><span class="b2">]</span><span class="b1">)</span>;</div>
<div class="ln" style="top:553.84px">9</div>
<div class="ln" style="top:589.52px">10</div><div class="code" style="top:589.52px"><span class="cm">// <span class="cj" style="width:52px;font-size:26px"><i>显</i><i>示</i></span> TabView<span class="cj" style="width:364px;font-size:26px"><i>，</i><i>并</i><i>在</i><i>加</i><i>载</i><i>完</i><i>成</i><i>后</i><i>执</i><i>行</i><i>回</i><i>调</i><i>函</i><i>数</i></span></span></div>
<div class="ln" style="top:625.2px">11</div><div class="code" style="top:625.2px">tab.show<span class="b1">(</span><span class="kw">function</span><span class="b2">(</span><span class="b2">)</span> <span class="b2">{</span></div>
<div class="ln" style="top:660.88px">12</div><div class="code" style="top:660.88px">    printl<span class="b3">(</span><span class="st">&quot;Label<span class="cj" style="width:52px;font-size:26px"><i>示</i><i>例</i></span> TabView <span class="cj" style="width:104px;font-size:26px"><i>显</i><i>示</i><i>完</i><i>成</i></span>&quot;</span><span class="b3">)</span>;</div>
<div class="ln" style="top:696.56px">13</div>
<div class="ln" style="top:732.24px">14</div><div class="code" style="top:732.24px">    <span class="cm">// ====================== <span class="cj" style="width:286px;font-size:26px"><i>第</i><i>一</i><i>页</i><i>：</i><i>文</i><i>本</i><i>与</i><i>颜</i><i>色</i><i>设</i><i>置</i></span> ======================</span></div>
<div class="ln" style="top:767.92px">15</div><div class="code" style="top:767.92px">    <span class="kw">var</span> textColorPage = <span class="kw">new</span> <span class="cl">Vertical</span><span class="b3">(</span><span class="b3">)</span>;</div>
<div class="ln" style="top:803.6px">16</div><div class="code" style="top:803.6px">    textColorPage.setSpacing<span class="b3">(</span><span class="nu">15</span><span class="b3">)</span>;</div>
<div class="ln" style="top:839.28px">17</div><div class="code" style="top:839.28px">    textColorPage.setBackgroundColor<span class="b3">(</span><span class="nu">240</span>, <span class="nu">240</span>, <span class="nu">240</span><span class="b3">)</span>;</div>
<div class="ln" style="top:874.96px">18</div>
<div class="ln" style="top:910.64px">19</div><div class="code" style="top:910.64px">    <span class="cm">// <span class="cj" style="width:52px;font-size:26px"><i>标</i><i>题</i></span></span></div>
<div class="ln" style="top:946.32px">20</div><div class="code" style="top:946.32px">    <span class="kw">var</span> title = <span class="kw">new</span> <span class="cl">Label</span><span class="b3">(</span><span class="b3">)</span>;</div>
<div class="ln" style="top:982.0px">21</div><div class="code" style="top:982.0px">    title.setText<span class="b3">(</span><span class="st">&quot;Label<span class="cj" style="width:234px;font-size:26px"><i>文</i><i>本</i><i>与</i><i>颜</i><i>色</i><i>设</i><i>置</i><i>演</i><i>示</i></span>&quot;</span><span class="b3">)</span>;</div>
<div class="ln" style="top:1017.68px">22</div><div class="code" style="top:1017.68px">    title.setFontSize<span class="b3">(</span><span class="nu">18.0</span><span class="b3">)</span>;</div>
<div class="ln" style="top:1053.36px">23</div><div class="code" style="top:1053.36px">    title.setTextColor<span class="b3">(</span><span class="nu">0</span>, <span class="nu">0</span>, <span class="nu">0</span><span class="b3">)</span>;</div>
<div class="ln" style="top:1089.04px">24</div><div class="code" style="top:1089.04px">    textColorPage.addView<span class="b3">(</span>title<span class="b3">)</span>;</div>
<div class="ln" style="top:1124.72px">25</div>
<div class="ln" style="top:1160.4px">26</div><div class="code" style="top:1160.4px">    <span class="cm">// <span class="cj" style="width:156px;font-size:26px"><i>基</i><i>本</i><i>文</i><i>本</i><i>设</i><i>置</i></span></span></div>
<div class="ln" style="top:1196.08px">27</div><div class="code" style="top:1196.08px">    <span class="kw">var</span> basicText = <span class="kw">new</span> <span class="cl">Label</span><span class="b3">(</span><span class="b3">)</span>;</div>
<div class="ln" style="top:1231.76px">28</div><div class="code" style="top:1231.76px">    basicText.setText<span class="b3">(</span><span class="st">&quot;<span class="cj" style="width:208px;font-size:26px"><i>基</i><i>本</i><i>文</i><i>本</i><i>设</i><i>置</i><i>示</i><i>例</i></span>&quot;</span><span class="b3">)</span>;</div>
<div class="ln" style="top:1267.44px">29</div><div class="code" style="top:1267.44px">    textColorPage.addView<span class="b3">(</span>basicText<span class="b3">)</span>;</div>
<div class="ln" style="top:1303.12px">30</div>
<div class="ln" style="top:1338.8px">31</div><div class="code" style="top:1338.8px">    <span class="cm">// <span class="cj" style="width:104px;font-size:26px"><i>红</i><i>色</i><i>文</i><i>本</i></span></span></div>
<div class="ln" style="top:1374.48px">32</div><div class="code" style="top:1374.48px">    <span class="kw">var</span> redText = <span class="kw">new</span> <span class="cl">Label</span><span class="b3">(</span><span class="b3">)</span>;</div>
<div class="ln" style="top:1410.16px">33</div><div class="code" style="top:1410.16px">    redText.setText<span class="b3">(</span><span class="st">&quot;<span class="cj" style="width:156px;font-size:26px"><i>这</i><i>是</i><i>红</i><i>色</i><i>文</i><i>本</i></span>&quot;</span><span class="b3">)</span>;</div>
<div class="ln" style="top:1445.84px">34</div><div class="code" style="top:1445.84px">    redText.setTextColor<span class="b3">(</span><span class="nu">255</span>, <span class="nu">0</span>, <span class="nu">0</span><span class="b3">)</span>; <span class="cm">// <span class="cj" style="width:52px;font-size:26px"><i>红</i><i>色</i></span></span></div>
<div class="ln" style="top:1481.52px">35</div><div class="code" style="top:1481.52px">    redText.setFontSize<span class="b3">(</span><span class="nu">16.0</span><span class="b3">)</span>;</div>
<div class="ln" style="top:1517.2px">36</div><div class="code" style="top:1517.2px">    textColorPage.addView<span class="b3">(</span>redText<span class="b3">)</span>;</div>
<div class="ln" style="top:1552.88px">37</div>
<div class="ln" style="top:1588.56px">38</div><div class="code" style="top:1588.56px">    <span class="cm">// <span class="cj" style="width:104px;font-size:26px"><i>绿</i><i>色</i><i>文</i><i>本</i></span></span></div>
<div class="a" style="left:729px;top:1628px;width:2287px;height:64px;background:#404040;"></div>
<div class="a" style="left:729px;top:1692px;width:2287px;height:238px;background:#2e2e2d;"></div>
<svg class="a" style="left:751px;top:1643px;" width="36" height="37" viewBox="0 0 36 37"><rect x="1" y="1" width="34" height="35" rx="4" fill="#f6f6f6"/><path d="M7 9H10M14 9H29M7 16H10M14 16H29" stroke="#4a4a4a" stroke-width="2.600"/><rect x="7" y="22" width="22" height="9" fill="#dedede"/></svg>
<div class="t" style="top:1643.2px;height:37px;line-height:37px;font-size:24.5px;left:800px;color:#dcdcdc;-webkit-text-stroke-width:.35px"><span class="cj" style="width:98.0px;font-size:24.5px"><i>运</i><i>行</i><i>日</i><i>志</i></span></div>
<div class="a" style="left:925px;top:1643px;width:193px;height:33px;background:#2b2b2b;"></div>
<div class="a" style="left:925px;top:1676px;width:250px;height:1.5px;background:#4c4c4c;"></div>
<div class="t" style="top:1642.0px;height:36px;line-height:36px;font-size:24px;left:930px;color:#ececec;-webkit-text-stroke-width:.4px"><span class="cj" style="width:48px;font-size:24px"><i>全</i><i>部</i></span></div>
<svg class="a" style="left:1138px;top:1652px;" width="20" height="14" viewBox="0 0 20 14"><path d="M1 1.500H19L10 12.500Z" fill="#e0e0e0"/></svg>
<svg class="a" style="left:1212px;top:1640px;" width="36" height="40" viewBox="0 0 36 40"><g fill="none" stroke="#378bca" stroke-width="2.800" stroke-linejoin="round" stroke-linecap="round"><path d="M15 3H21V14H15Z"/><path d="M8 14H28a3 3 0 0 1 3 3V22H5V17a3 3 0 0 1 3-3Z"/><path d="M5.500 22L3 37H33L30.500 22"/><path d="M12 29V37M18 27V37M24 29V37"/></g></svg>
<svg class="a" style="left:1282.5px;top:1646px;" width="34" height="34" viewBox="0 0 32 32"><g fill="none" stroke="#dcdcdc" stroke-width="2.800" stroke-linecap="round" stroke-linejoin="round"><path d="M12 3H5.500A2.500 2.500 0 0 0 3 5.500V26.500A2.500 2.500 0 0 0 5.500 29H26.500A2.500 2.500 0 0 0 29 26.500V19"/><circle cx="24" cy="8" r="4.200"/><path d="M8 24L17 15M10.500 15H17V21.500"/></g></svg>
<div class="t" style="top:1732.7px;height:36px;line-height:36px;font-size:24px;left:778px;color:#d0d0d0;">[2026-02-23 21:41:06] <span style="color:#e9e23c;font-weight:bold;text-decoration:underline">&nbsp;#0&nbsp;</span><span class="cj" style="width:23px;font-size:23px"><i>【</i></span>String<span class="cj" style="width:23px;font-size:23px"><i>】</i></span>Label<span class="cj" style="width:184px;font-size:23px"><i>示</i><i>例</i><i>视</i><i>图</i><i>添</i><i>加</i><i>完</i><i>成</i></span></div>
<div class="t" style="top:1789.6px;height:36px;line-height:36px;font-size:24px;left:774.5px;color:#3685c4;"><span class="cj" style="width:184px;font-size:23px"><i>【</i><i>系</i><i>统</i><i>日</i><i>志</i><i>】</i><i>启</i><i>动</i></span>start.js</div>
<div class="t" style="top:1846.4px;height:36px;line-height:36px;font-size:24px;left:774.5px;color:#3685c4;"><span class="cj" style="width:138px;font-size:23px"><i>【</i><i>系</i><i>统</i><i>日</i><i>志</i><i>】</i></span>Debug<span class="cj" style="width:138px;font-size:23px"><i>变</i><i>量</i><i>清</i><i>理</i><i>成</i><i>功</i></span></div>
<div class="t" style="top:1903.6px;height:36px;line-height:36px;font-size:24px;left:778px;color:#d0d0d0;">[2026-02-23 21:41:45] <span style="color:#e9e23c;font-weight:bold;text-decoration:underline">&nbsp;#0&nbsp;</span><span class="cj" style="width:23px;font-size:23px"><i>【</i></span>String<span class="cj" style="width:23px;font-size:23px"><i>】</i></span>Label<span class="cj" style="width:230px;font-size:23px"><i>控</i><i>件</i><i>方</i><i>法</i><i>演</i><i>示</i><i>程</i><i>序</i><i>启</i><i>动</i></span></div>
</body></html>
